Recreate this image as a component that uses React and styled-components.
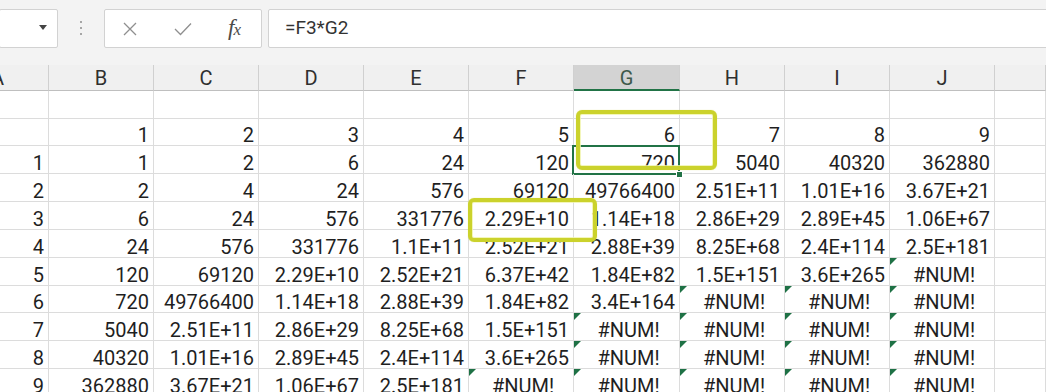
import React from "react";
import styled, { createGlobalStyle } from "styled-components";

const GREEN = "#217346";

const columns = ["A", "B", "C", "D", "E", "F", "G", "H", "I", "J", ""];

const rows = [
  ["", "", "", "", "", "", "", "", "", "", ""],
  ["", "1", "2", "3", "4", "5", "6", "7", "8", "9", ""],
  ["1", "1", "2", "6", "24", "120", "720", "5040", "40320", "362880", ""],
  ["2", "2", "4", "24", "576", "69120", "49766400", "2.51E+11", "1.01E+16", "3.67E+21", ""],
  ["3", "6", "24", "576", "331776", "2.29E+10", "1.14E+18", "2.86E+29", "2.89E+45", "1.06E+67", ""],
  ["4", "24", "576", "331776", "1.1E+11", "2.52E+21", "2.88E+39", "8.25E+68", "2.4E+114", "2.5E+181", ""],
  ["5", "120", "69120", "2.29E+10", "2.52E+21", "6.37E+42", "1.84E+82", "1.5E+151", "3.6E+265", "#NUM!", ""],
  ["6", "720", "49766400", "1.14E+18", "2.88E+39", "1.84E+82", "3.4E+164", "#NUM!", "#NUM!", "#NUM!", ""],
  ["7", "5040", "2.51E+11", "2.86E+29", "8.25E+68", "1.5E+151", "#NUM!", "#NUM!", "#NUM!", "#NUM!", ""],
  ["8", "40320", "1.01E+16", "2.89E+45", "2.4E+114", "3.6E+265", "#NUM!", "#NUM!", "#NUM!", "#NUM!", ""],
  ["9", "362880", "3.67E+21", "1.06E+67", "2.5E+181", "#NUM!", "#NUM!", "#NUM!", "#NUM!", "#NUM!", ""],
];

// active cell and the two yellow call-outs drawn over the sheet
const active = { row: 2, col: 6 };
const marks = [
  { row: 1, col: 6, left: 2, top: -9, width: 141, height: 60 },
  { row: 4, col: 5, left: -1, top: -4, width: 129, height: 44 },
];

const GlobalStyle = createGlobalStyle`
  html, body {
    margin: 0;
    padding: 0;
    background: #f3f3f3;
    overflow: hidden;
  }
  * {
    box-sizing: border-box;
  }
`;

const Page = styled.div`
  width: 1046px;
  height: 392px;
  display: flex;
  flex-direction: column;
  background: #f3f3f3;
  font-family: Roboto, "Liberation Sans", sans-serif;
  overflow: hidden;
`;

const Toolbar = styled.div`
  display: flex;
  align-items: stretch;
  height: 48px;
  padding-top: 9px;
  flex-shrink: 0;
`;

const Box = styled.div`
  background: #ffffff;
  border: 1px solid #d2d2d2;
  border-radius: 2px;
  display: flex;
  align-items: center;
`;

const NameBox = styled(Box)`
  width: 59px;
  margin-left: -1px;
  justify-content: flex-end;
  padding-right: 10px;
`;

const Caret = styled.span`
  width: 0;
  height: 0;
  border-left: 4px solid transparent;
  border-right: 4px solid transparent;
  border-top: 5px solid #444;
  margin-top: -2px;
`;

const Grip = styled.div`
  width: 46px;
  display: flex;
  flex-direction: column;
  align-items: center;
  justify-content: center;
  gap: 4px;
  padding-bottom: 2px;
`;

const Dot = styled.span`
  width: 2px;
  height: 2px;
  border-radius: 1px;
  background: #8c8c8c;
`;

const FuncBox = styled(Box)`
  width: 158px;
  padding: 0 0 0 17px;
`;

const IconSlot = styled.span`
  width: ${(p) => p.w}px;
  display: flex;
  align-items: center;
  justify-content: flex-start;
`;

const Fx = styled.span`
  font-family: "Liberation Serif", "DejaVu Serif", serif;
  font-style: italic;
  color: #4a4a4a;
  font-size: 23px;
  line-height: 1;
  margin-top: -3px;

  small {
    font-size: 17px;
    margin-left: -1px;
  }
`;

const FormulaBar = styled(Box)`
  flex: 1;
  margin-left: 6px;
  margin-right: -3px;
  padding-left: 16px;
  padding-bottom: 2px;
  font-size: 19px;
  color: #333;
`;

const Sheet = styled.div`
  margin-top: 17px;
  display: grid;
  grid-template-columns: 49px repeat(5, 105px) 106px repeat(3, 105px) 1fr;
  grid-template-rows: 26px 28px 27px 28px 28px 28px 28px 28px 27px 28px 28px 28px;
  background: #ffffff;
  flex: 1;
`;

const HeadCell = styled.div`
  display: flex;
  align-items: center;
  justify-content: ${(p) => (p.first ? "flex-start" : "center")};
  background: ${(p) => (p.selected ? "#d3d3d3" : "#f0f0f0")};
  border-right: 1px solid #d0d0d0;
  border-bottom: ${(p) => (p.selected ? `2px solid ${GREEN}` : "1px solid #bfbfbf")};
  font-size: 20px;
  color: ${(p) => (p.selected ? "#3f5a4b" : "#2f2f2f")};
  padding-top: 1px;
  overflow: hidden;

  span {
    margin-left: ${(p) => (p.first ? "-9px" : "0")};
  }
`;

const Cell = styled.div`
  position: relative;
  display: flex;
  align-items: flex-end;
  justify-content: ${(p) => (p.error ? "center" : "flex-end")};
  padding: 0 ${(p) => (p.error ? "0" : "4px")} 0 4px;
  border-right: 1px solid #dcdcdc;
  border-bottom: 1px solid #dcdcdc;
  font-size: 20px;
  line-height: 20px;
  color: #1f1f1f;
  white-space: nowrap;

  ${(p) =>
    p.error &&
    `
    &::before {
      content: "";
      position: absolute;
      top: 0;
      left: 0;
      border-top: 7px solid #1e7145;
      border-right: 7px solid transparent;
    }
  `}

  ${(p) =>
    p.active &&
    `
    &::after {
      content: "";
      position: absolute;
      inset: -1px -1px -2px -2px;
      border: 2px solid ${GREEN};
      pointer-events: none;
    }
  `}
`;

const FillHandle = styled.span`
  position: absolute;
  right: -4px;
  bottom: -5px;
  width: 7px;
  height: 7px;
  background: ${GREEN};
  border: 1px solid #ffffff;
  z-index: 1;
`;

const Mark = styled.span`
  position: absolute;
  left: ${(p) => p.left}px;
  top: ${(p) => p.top}px;
  width: ${(p) => p.width}px;
  height: ${(p) => p.height}px;
  border: 4px solid #cbd22c;
  border-radius: 6px;
  box-shadow: inset 0 0 0 1px rgba(240, 244, 170, 0.8), 0 0 1px rgba(200, 206, 40, 0.6);
  z-index: 3;
  pointer-events: none;
`;

function CloseIcon() {
  return (
    <svg width="16" height="16" viewBox="0 0 16 16">
      <path d="M2 2 L14 14 M14 2 L2 14" stroke="#8f8f8f" strokeWidth="1.3" fill="none" />
    </svg>
  );
}

function CheckIcon() {
  return (
    <svg width="18" height="14" viewBox="0 0 18 14">
      <path d="M1 7 L6.5 12.5 L17 1.5" stroke="#8f8f8f" strokeWidth="1.3" fill="none" />
    </svg>
  );
}

export default function App() {
  return (
    <Page>
      <GlobalStyle />
      <Toolbar>
        <NameBox>
          <Caret />
        </NameBox>
        <Grip>
          <Dot />
          <Dot />
          <Dot />
        </Grip>
        <FuncBox>
          <IconSlot w={52}>
            <CloseIcon />
          </IconSlot>
          <IconSlot w={54}>
            <CheckIcon />
          </IconSlot>
          <IconSlot w={30}>
            <Fx>
              f<small>x</small>
            </Fx>
          </IconSlot>
        </FuncBox>
        <FormulaBar>=F3*G2</FormulaBar>
      </Toolbar>

      <Sheet>
        {columns.map((c, i) => (
          <HeadCell key={"h" + i} first={i === 0} selected={i === active.col}>
            <span>{c}</span>
          </HeadCell>
        ))}
        {rows.map((row, r) =>
          row.map((value, c) => {
            const isActive = r === active.row && c === active.col;
            const mark = marks.find((m) => m.row === r && m.col === c);
            return (
              <Cell key={r + "-" + c} error={value === "#NUM!"} active={isActive}>
                {value}
                {isActive && <FillHandle />}
                {mark && <Mark {...mark} />}
              </Cell>
            );
          })
        )}
      </Sheet>
    </Page>
  );
}
